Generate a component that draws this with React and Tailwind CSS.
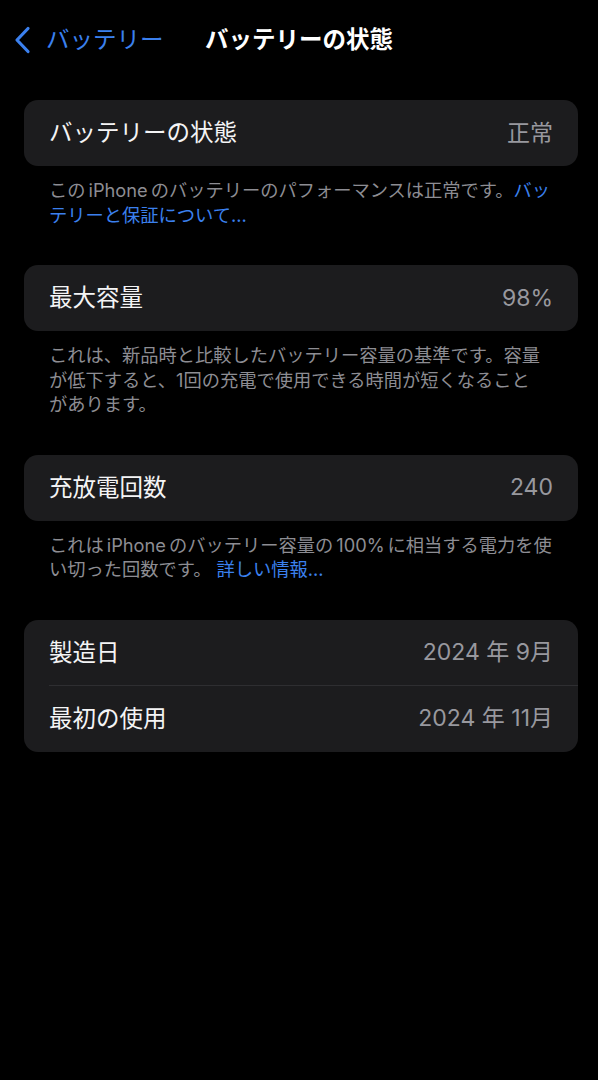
import React from "react";

const font = {
  fontFamily:
    '"Inter", "Noto Sans CJK JP", "Noto Sans", sans-serif',
};

const Row = ({ label, value, divider }) => (
  <div className="relative flex h-[66px] items-center justify-between px-[25px]">
    <span className="text-[23.5px] text-[#f4f4f5]">{label}</span>
    <span className="text-[23px] text-[#98989e]">{value}</span>
    {divider && (
      <div className="absolute bottom-0 left-[25px] right-0 h-px bg-[#2e2e31]" />
    )}
  </div>
);

const Footer = ({ children }) => (
  <p className="whitespace-nowrap px-[25px] pt-[12px] pb-[38px] text-[18.25px] leading-[24.5px] text-[#8d8d93]">
    {children}
  </p>
);

const Link = ({ children }) => (
  <span className="text-[#3b80ee]">{children}</span>
);

export default function App() {
  return (
    <div className="min-h-[1080px] w-full bg-black" style={font}>
      {/* nav bar */}
      <div className="grid h-[80px] grid-cols-[1fr_auto_1fr] items-center">
        <div className="flex items-center pl-[13px]">
          <svg width="20" height="28" viewBox="0 0 20 28" fill="none">
            <path
              d="M15 2.5 L4 14 L15 25.5"
              stroke="#3b80ee"
              strokeWidth="3.2"
              strokeLinecap="round"
              strokeLinejoin="round"
            />
          </svg>
          <span className="ml-[13px] text-[23.5px] text-[#3b80ee]">バッテリー</span>
        </div>
        <h1 className="text-[23.5px] font-semibold text-white">バッテリーの状態</h1>
        <div />
      </div>

      <div className="pl-[24px] pr-[20px] pt-[20px]">
        <div className="rounded-[14px] bg-[#1c1c1e]">
          <Row label="バッテリーの状態" value="正常" />
        </div>
        <Footer>
          この<span className="mx-[3px]">iPhone</span>のバッテリーのパフォーマンスは正常です。<Link>バッ</Link>
          <br />
          <Link>テリーと保証について...</Link>
        </Footer>

        <div className="rounded-[14px] bg-[#1c1c1e]">
          <Row label="最大容量" value="98%" />
        </div>
        <Footer>
          これは、新品時と比較したバッテリー容量の基準です。容量
          <br />
          が低下すると、1回の充電で使用できる時間が短くなること
          <br />
          があります。
        </Footer>

        <div className="rounded-[14px] bg-[#1c1c1e]">
          <Row label="充放電回数" value="240" />
        </div>
        <Footer>
          これは<span className="mx-[3px]">iPhone</span>のバッテリー容量の<span className="mx-[3px]">100%</span>に相当する電力を使
          <br />
          い切った回数です。 <Link>詳しい情報...</Link>
        </Footer>

        <div className="rounded-[14px] bg-[#1c1c1e]">
          <Row label="製造日" value="2024 年 9月" divider />
          <Row label="最初の使用" value="2024 年 11月" />
        </div>
      </div>
    </div>
  );
}
